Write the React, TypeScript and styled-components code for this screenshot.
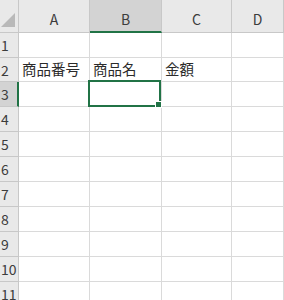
import React from 'react'
import styled, { createGlobalStyle, css } from 'styled-components'

const GlobalStyle = createGlobalStyle`
  html, body {
    margin: 0;
    padding: 0;
    background: #ffffff;
    overflow: hidden;
  }
  body {
    font-family: "Noto Sans CJK JP", "Noto Sans", sans-serif;
  }
`

const HEADER_BG = '#e9e9e9'
const HEADER_SEL_BG = '#d3d3d3'
const HEADER_LINE = '#c8c8c8'
const GRID_LINE = '#dadada'
const GREEN = '#217346'

const COLUMNS = ['A', 'B', 'C', 'D']
const ROW_COUNT = 11
const SELECTED_COL = 'B'
const SELECTED_ROW = 3

const cells: Record<string, string> = {
  A2: '商品番号',
  B2: '商品名',
  C2: '金額',
}

const Sheet = styled.div`
  display: grid;
  grid-template-columns: 19px 71px 72px 70px 1fr;
  grid-template-rows: 33px 25px 24px repeat(${ROW_COUNT - 2}, 25px);
  width: 284px;
  height: 300px;
  overflow: hidden;
`

const Corner = styled.div`
  position: relative;
  box-sizing: border-box;
  background: ${HEADER_BG};
  border-right: 1px solid ${HEADER_LINE};
  border-bottom: 1px solid ${HEADER_LINE};

  &::after {
    content: '';
    position: absolute;
    right: 3px;
    bottom: 5px;
    width: 0;
    height: 0;
    border-left: 14px solid transparent;
    border-bottom: 14px solid #b9b9b9;
  }
`

const ColHeader = styled.div<{ $active?: boolean }>`
  box-sizing: border-box;
  display: flex;
  align-items: flex-end;
  justify-content: center;
  padding-bottom: 5px;
  background: ${HEADER_BG};
  border-right: 1px solid ${HEADER_LINE};
  border-bottom: 1px solid ${HEADER_LINE};
  color: #3c3c3c;
  font-size: 14px;
  line-height: 16px;
  ${({ $active }) =>
    $active &&
    css`
      background: ${HEADER_SEL_BG};
      border-bottom: 2px solid ${GREEN};
      padding-bottom: 4px;
    `}
`

const RowHeader = styled.div<{ $active?: boolean }>`
  box-sizing: border-box;
  display: flex;
  align-items: center;
  padding-left: 1px;
  background: ${HEADER_BG};
  border-right: 1px solid ${HEADER_LINE};
  border-bottom: 1px solid ${HEADER_LINE};
  color: #3c3c3c;
  font-size: 14px;
  line-height: 16px;
  ${({ $active }) =>
    $active &&
    css`
      background: ${HEADER_SEL_BG};
      border-right: 2px solid ${GREEN};
    `}
`

const Cell = styled.div<{ $active?: boolean }>`
  position: relative;
  box-sizing: border-box;
  display: flex;
  align-items: flex-end;
  padding: 0 0 3px 3px;
  border-right: 1px solid ${GRID_LINE};
  border-bottom: 1px solid ${GRID_LINE};
  color: #2b2b2b;
  font-size: 14.5px;
  line-height: 18px;
  white-space: nowrap;
  overflow: visible;
`

const Selection = styled.div`
  position: absolute;
  top: -2px;
  left: -2px;
  right: 0;
  bottom: -1px;
  border: 2px solid ${GREEN};
  pointer-events: none;
  z-index: 2;
`

const FillHandle = styled.div`
  position: absolute;
  right: -3px;
  bottom: -3px;
  width: 5px;
  height: 5px;
  background: ${GREEN};
  border: 1px solid #ffffff;
`

export default function App() {
  return (
    <>
      <GlobalStyle />
      <Sheet>
        <Corner />
        {COLUMNS.map((c) => (
          <ColHeader key={c} $active={c === SELECTED_COL}>
            {c}
          </ColHeader>
        ))}
        {Array.from({ length: ROW_COUNT }, (_, i) => i + 1).map((r) => (
          <React.Fragment key={r}>
            <RowHeader $active={r === SELECTED_ROW}>{r}</RowHeader>
            {COLUMNS.map((c) => {
              const active = c === SELECTED_COL && r === SELECTED_ROW
              return (
                <Cell key={c + r}>
                  {cells[c + r]}
                  {active && (
                    <Selection>
                      <FillHandle />
                    </Selection>
                  )}
                </Cell>
              )
            })}
          </React.Fragment>
        ))}
      </Sheet>
    </>
  )
}
